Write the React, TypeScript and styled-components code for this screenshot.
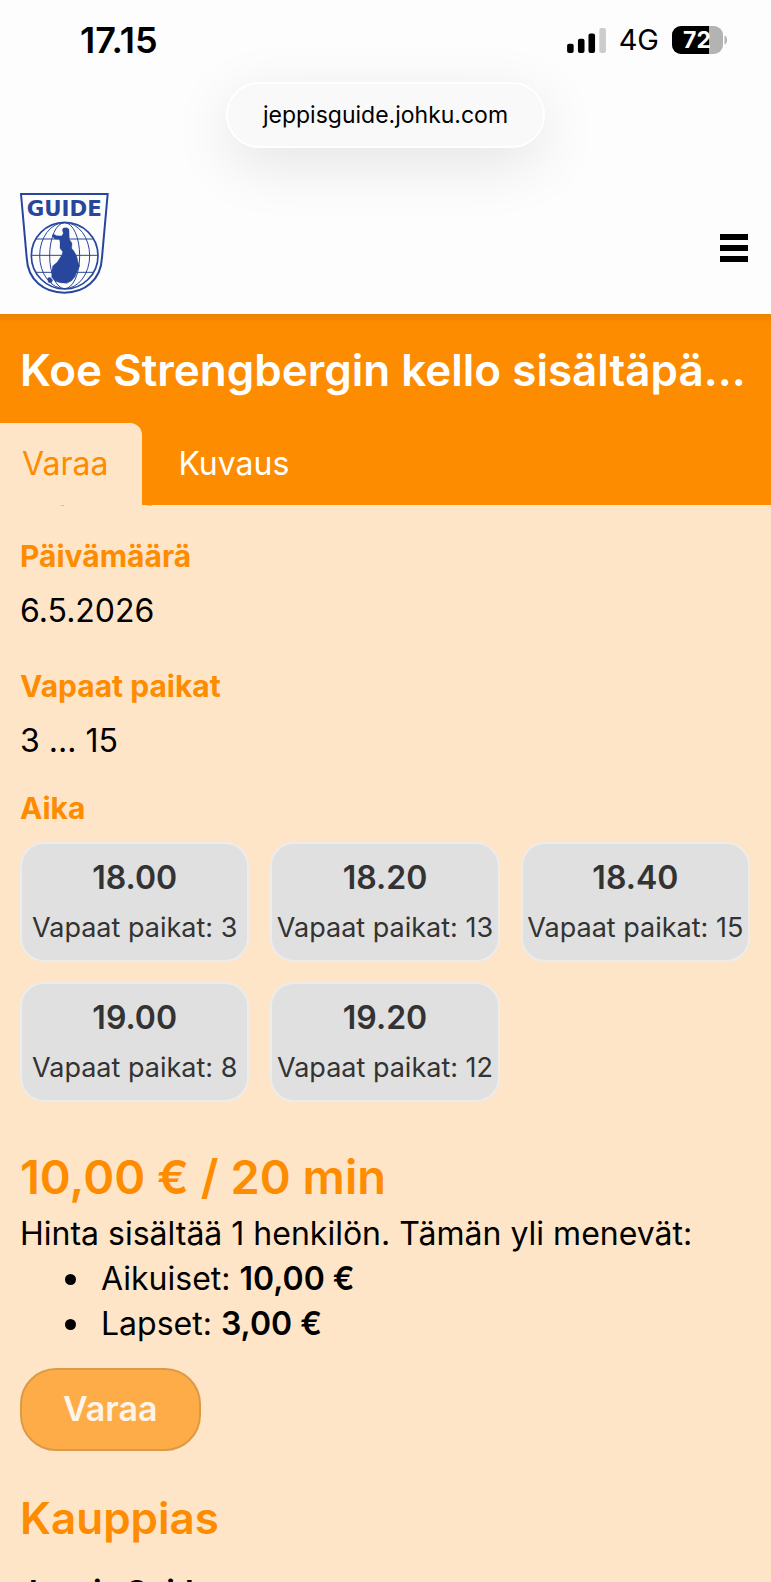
import React, { useState } from 'react';
import styled, { createGlobalStyle, ThemeProvider } from 'styled-components';

const theme = {
  colors: {
    accent: '#fe8c00',
    surface: '#ffe5c7',
    header: '#fdfdfd',
    text: '#000000',
    slot: '#e0e0e0',
    slotBorder: '#ececec',
    slotText: '#333333',
    logo: '#28479c',
  },
};

const GlobalStyle = createGlobalStyle`
  * {
    box-sizing: border-box;
  }

  body {
    margin: 0;
    background: #ffe5c7;
    font-family: Inter, 'Liberation Sans', sans-serif;
    font-size: 32px;
    line-height: 44px;
    color: #000;
  }

  h1, h2, h3, p, ul {
    margin: 0;
    padding: 0;
  }

  button {
    font-family: inherit;
    cursor: pointer;
  }
`;

const Screen = styled.div`
  display: flex;
  flex-direction: column;
  height: 100vh;
  overflow: hidden;
  background: ${({ theme }) => theme.colors.surface};
`;

const Header = styled.header`
  flex-shrink: 0;
  background: ${({ theme }) => theme.colors.header};
`;

const StatusBar = styled.div`
  display: flex;
  align-items: center;
  justify-content: space-between;
  height: 82px;
  padding: 0 44px 2px 80px;
`;

const Clock = styled.time`
  font-size: 36px;
  font-weight: 600;
`;

const StatusIcons = styled.div`
  display: flex;
  align-items: center;
  gap: 13px;
  font-size: 29px;

  svg {
    display: block;
  }
`;

const AddressBar = styled.div`
  display: flex;
  align-items: center;
  justify-content: center;
  width: fit-content;
  height: 66px;
  margin: 0 auto;
  padding: 0 35px;
  border: 2px solid #fff;
  border-radius: 33px;
  background: #f9f9f9;
  box-shadow: 0 16px 60px rgba(0, 0, 0, 0.1);
  font-size: 23px;
  line-height: 32px;
`;

const SiteBar = styled.div`
  display: flex;
  align-items: center;
  justify-content: space-between;
  padding: 45px 23px 20px 20px;
`;

const LogoLink = styled.a`
  display: block;

  svg {
    display: block;
  }
`;

const LogoText = styled.text`
  font-family: 'DejaVu Sans', sans-serif;
  font-size: 64px;
  font-weight: 700;
`;

const MenuButton = styled.button`
  display: flex;
  flex-direction: column;
  gap: 5px;
  margin-top: 8px;
  padding: 0;
  border: 0;
  background: none;

  span {
    width: 28px;
    height: 6px;
    background: #000;
  }
`;

const Hero = styled.section`
  flex-shrink: 0;
  background: linear-gradient(rgba(0, 0, 0, 0.07), transparent 10px) ${({ theme }) => theme.colors.accent};
`;

const Title = styled.h1`
  padding: 26px 20px 23px;
  overflow: hidden;
  font-size: 44px;
  font-weight: 600;
  line-height: 60px;
  color: #fff;
  text-overflow: ellipsis;
  white-space: nowrap;
`;

const Tabs = styled.div`
  display: flex;
`;

const Tab = styled.button<{ $active: boolean }>`
  height: 82px;
  padding: 0 34px 0 22px;
  border: 0;
  border-radius: 0 12px 0 0;
  background: ${({ theme, $active }) => ($active ? theme.colors.surface : 'transparent')};
  color: ${({ theme, $active }) => ($active ? theme.colors.accent : '#fff')};
  font-size: 32px;
  font-weight: 400;
  line-height: 44px;

  & + & {
    padding-left: 36px;
  }
`;

const Content = styled.main`
  flex: 1;
  min-height: 0;
  padding: 29px 21px 0 20px;
  overflow-y: auto;
  scrollbar-width: none;
  background:
    linear-gradient(#fcb565, #fcb565) 61px 0 / 3px 1px no-repeat,
    linear-gradient(#fcb565, #fcb565) 147px 0 / 5px 1px no-repeat;
`;

const Label = styled.h3`
  font-size: 30px;
  font-weight: 700;
  line-height: 44px;
  color: ${({ theme }) => theme.colors.accent};
`;

const Value = styled.p`
  margin: 11px 0 31px;
  font-weight: 400;

  &:last-of-type {
    margin-bottom: 23px;
  }
`;

const SlotGrid = styled.div`
  display: grid;
  grid-template-columns: repeat(3, 1fr);
  gap: 20px 21px;
  margin-top: 12px;
`;

const Slot = styled.button`
  display: flex;
  flex-direction: column;
  align-items: center;
  gap: 10px;
  min-width: 0;
  padding: 12px 0 14px;
  border: 2px solid ${({ theme }) => theme.colors.slotBorder};
  border-radius: 24px;
  background: ${({ theme }) => theme.colors.slot};
  color: ${({ theme }) => theme.colors.slotText};
  font-size: 27px;
  font-weight: 400;
  line-height: 36px;
  white-space: nowrap;

  strong {
    font-size: 32px;
    font-weight: 600;
    line-height: 44px;
  }
`;

const Heading = styled.h2<{ $large?: boolean }>`
  font-size: ${({ $large }) => ($large ? 47 : 44)}px;
  font-weight: 600;
  line-height: 60px;
  color: ${({ theme }) => theme.colors.accent};
`;

const Price = styled.section`
  margin: 45px 0 22px;

  p {
    margin-top: 5px;
  }

  strong {
    font-weight: 600;
  }
`;

const PriceList = styled.ul`
  padding-left: 45px;
  line-height: 45px;
  list-style: none;

  li::before {
    content: '';
    display: inline-block;
    width: 11px;
    height: 11px;
    margin-right: 25px;
    border-radius: 50%;
    background: ${({ theme }) => theme.colors.text};
    vertical-align: 5px;
  }
`;

const BookButton = styled.button`
  display: block;
  height: 83px;
  margin-bottom: 37px;
  padding: 0 41px 2px;
  border: 2px solid #dc9a46;
  border-radius: 36px;
  background: #fdac48;
  color: #fff4e8;
  font-size: 34px;
  font-weight: 600;
  line-height: 44px;
`;

const Merchant = styled.p`
  margin-top: 21px;
  font-size: 30px;
  font-weight: 700;
`;

const SLOTS = [
  { time: '18.00', free: 3 },
  { time: '18.20', free: 13 },
  { time: '18.40', free: 15 },
  { time: '19.00', free: 8 },
  { time: '19.20', free: 12 },
];

const PRICES = [
  { group: 'Aikuiset', price: '10,00 €' },
  { group: 'Lapset', price: '3,00 €' },
];

const TABS = ['Varaa', 'Kuvaus'];

const SignalIcon = () => (
  <svg width="39" height="25" viewBox="0 0 118 76" aria-hidden="true">
    <rect x="0" y="48" width="20" height="28" rx="6" />
    <rect x="33" y="33" width="20" height="43" rx="6" />
    <rect x="65" y="17" width="20" height="59" rx="6" />
    <rect x="98" y="0" width="20" height="76" rx="6" fill="#cccccc" />
  </svg>
);

const BatteryIcon = () => (
  <svg width="55" height="28" viewBox="0 0 55 28" aria-label="72 %">
    <clipPath id="level">
      <rect width="37" height="28" />
    </clipPath>
    <rect width="51" height="28" rx="9" fill="#b3b3b3" />
    <rect width="51" height="28" rx="9" clipPath="url(#level)" />
    <path d="M52.500 9.500c2 .7 2.500 2.400 2.500 4.500s-.5 3.800-2.500 4.500z" fill="#b3b3b3" />
    <text x="25" y="22" fill="#fff" fontSize="23" fontWeight="700" textAnchor="middle">
      72
    </text>
  </svg>
);

const GuideLogo = () => (
  <svg width="89" height="101" viewBox="60 39 267 303" fill="none" stroke={theme.colors.logo} strokeWidth="3">
    <path strokeWidth="6" d="M63 42H323L306 232C303 300 254 338 193 338S83 300 80 232Z" />
    <circle cx="194" cy="227" r="100" strokeWidth="5" />
    <ellipse cx="194" cy="227" rx="75" ry="99" />
    <ellipse cx="194" cy="227" rx="45" ry="99" />
    <path d="M108 177H280M94 226H294M108 277H280" />
    <path
      fill={theme.colors.logo}
      strokeWidth="1"
      d="M187 150L190 144L201 143L207 148L208 178L216 190L215 205L222 214L230 228L234 245L239 258L232 272L225 290L214 303L200 310L180 308L165 303L155 292L156 270L158 258L172 246L186 224L188 215L180 205L180 185L178 178L165 177L156 168L160 162L170 167L185 168L190 160ZM143 294L150 292L158 300L155 308L145 307Z"
    />
    <LogoText x="193" y="107" textAnchor="middle" fill={theme.colors.logo} stroke="none">
      GUIDE
    </LogoText>
  </svg>
);

export default function App() {
  const [activeTab, setActiveTab] = useState('Varaa');

  return (
    <ThemeProvider theme={theme}>
      <GlobalStyle />
      <Screen>
        <Header>
          <StatusBar>
            <Clock>17.15</Clock>
            <StatusIcons>
              <SignalIcon />
              <span>4G</span>
              <BatteryIcon />
            </StatusIcons>
          </StatusBar>
          <AddressBar>jeppisguide.johku.com</AddressBar>
          <SiteBar>
            <LogoLink href="#" aria-label="Guide">
              <GuideLogo />
            </LogoLink>
            <MenuButton type="button" aria-label="Valikko">
              <span />
              <span />
              <span />
            </MenuButton>
          </SiteBar>
        </Header>

        <Hero>
          <Title>Koe Strengbergin kello sisältäpä...</Title>
          <Tabs role="tablist">
            {TABS.map((tab) => (
              <Tab
                key={tab}
                type="button"
                role="tab"
                aria-selected={tab === activeTab}
                $active={tab === activeTab}
                onClick={() => setActiveTab(tab)}
              >
                {tab}
              </Tab>
            ))}
          </Tabs>
        </Hero>

        <Content>
          <section>
            <Label>Päivämäärä</Label>
            <Value>6.5.2026</Value>
            <Label>Vapaat paikat</Label>
            <Value>3 ... 15</Value>
            <Label>Aika</Label>
            <SlotGrid>
              {SLOTS.map(({ time, free }) => (
                <Slot key={time} type="button">
                  <strong>{time}</strong>
                  <span>Vapaat paikat: {free}</span>
                </Slot>
              ))}
            </SlotGrid>
          </section>

          <Price>
            <Heading $large>10,00 € / 20 min</Heading>
            <p>Hinta sisältää 1 henkilön. Tämän yli menevät:</p>
            <PriceList>
              {PRICES.map(({ group, price }) => (
                <li key={group}>
                  {group}: <strong>{price}</strong>
                </li>
              ))}
            </PriceList>
          </Price>

          <BookButton type="button">Varaa</BookButton>

          <Heading>Kauppias</Heading>
          <Merchant>Jeppis Guide</Merchant>
        </Content>
      </Screen>
    </ThemeProvider>
  );
}
